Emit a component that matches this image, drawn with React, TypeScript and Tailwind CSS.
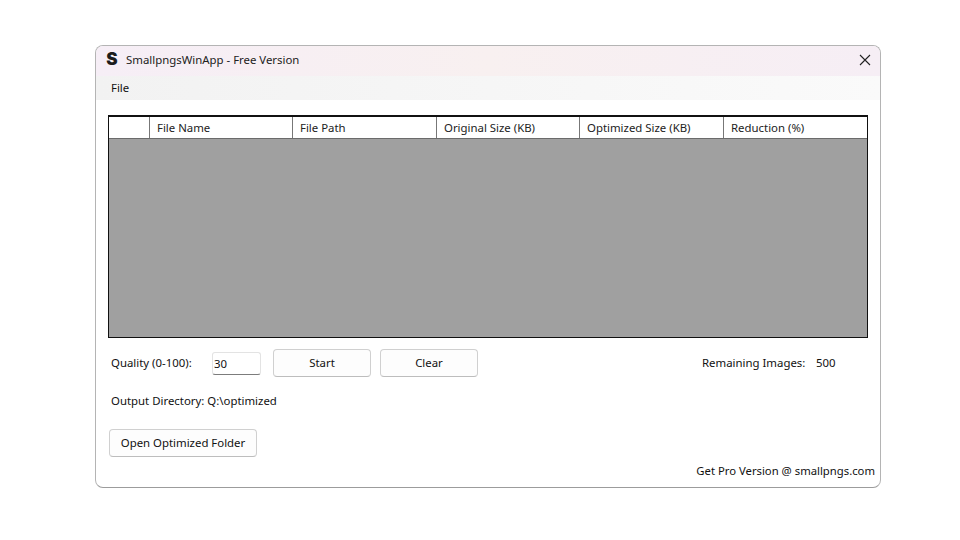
const font = { fontFamily: '"Noto Sans", "Open Sans", sans-serif' };

const columns = [
  { label: "", width: "w-[41px]" },
  { label: "File Name", width: "w-[143px]" },
  { label: "File Path", width: "w-[144px]" },
  { label: "Original Size (KB)", width: "w-[143px]" },
  { label: "Optimized Size (KB)", width: "w-[144px]" },
  { label: "Reduction (%)", width: "flex-1" },
];

function Button({ label, width }: { label: string; width: string }) {
  return (
    <button className={`${width} h-[28px] rounded-[4px] border border-[#d0d0d0] border-b-[#bdbdbd] bg-[#fdfdfd] pb-px text-[11.4px] text-[#111]`}>
      {label}
    </button>
  );
}

export default function App() {
  return (
    <div className="w-[960px] h-[540px] bg-white pt-[45px] pl-[95px] overflow-hidden" style={font}>
      <div className="w-[786px] h-[443px] flex flex-col rounded-[8px] border border-[#b4b4b4] border-b-[#9c9c9c] bg-white overflow-hidden">
        <div className="h-[30px] shrink-0 flex items-center bg-gradient-to-r from-[#f6eef6] via-[#f8f0f0] to-[#f6eef5]">
          <span className="w-[30px] pl-[2px] text-center text-[17px] leading-none font-black text-[#1c1c1c] pb-[3px]" style={{ fontFamily: 'Inter, sans-serif' }}>
            S
          </span>
          <span className="text-[11.4px] text-[#222] -mt-[2px]">SmallpngsWinApp - Free Version</span>
          <svg className="ml-auto mr-[9px] -mt-[2px]" width="12" height="12" viewBox="0 0 12 12" fill="none" stroke="#222" strokeWidth="1.1">
            <path d="M1 1l10 10M11 1L1 11" />
          </svg>
        </div>
        <div className="h-[24px] shrink-0 flex items-center pl-[15px] pb-px bg-gradient-to-r from-[#f2f2f2] to-[#fafafa] text-[11.4px] text-[#111]">
          File
        </div>
        <div className="flex-1 flex flex-col px-[12px] pt-[15px]">
          <div className="w-[760px] h-[223px] flex flex-col border border-t-2 border-[#111] bg-[#a0a0a0]">
            <div className="h-[22px] flex bg-white border-b border-[#6b6b6b]">
              {columns.map((col, i) => (
                <div
                  key={i}
                  className={`${col.width} flex items-center pl-[7px] pt-px text-[11.4px] text-[#222] ${i < columns.length - 1 ? "border-r border-[#777]" : ""}`}
                >
                  {col.label}
                </div>
              ))}
            </div>
          </div>
          <div className="flex items-center h-[28px] mt-[11px] text-[11.4px] text-[#111]">
            <span className="w-[104px] pl-[3px] pb-px">Quality (0-100):</span>
            <div className="w-[49px] h-[23px] flex items-center pl-px mt-px rounded-[3px] border border-[#e3e3e3] border-b-[#7c7c7c] bg-white">30</div>
            <div className="ml-[12px] flex gap-[9px]">
              <Button label="Start" width="w-[98px]" />
              <Button label="Clear" width="w-[98px]" />
            </div>
            <span className="ml-[224px] w-[114px] pb-px">Remaining Images:</span>
            <span className="pb-px">500</span>
          </div>
          <div className="mt-[15px] pl-[3px] h-[18px] flex items-center text-[11.4px] text-[#111]">Output Directory: Q:\optimized</div>
          <div className="mt-[19px] pl-px">
            <Button label="Open Optimized Folder" width="w-[148px]" />
          </div>
          <div className="mt-[4px] -mr-[7px] text-right text-[11.3px] leading-[20px] text-[#111]">Get Pro Version @ smallpngs.com</div>
        </div>
      </div>
    </div>
  );
}
